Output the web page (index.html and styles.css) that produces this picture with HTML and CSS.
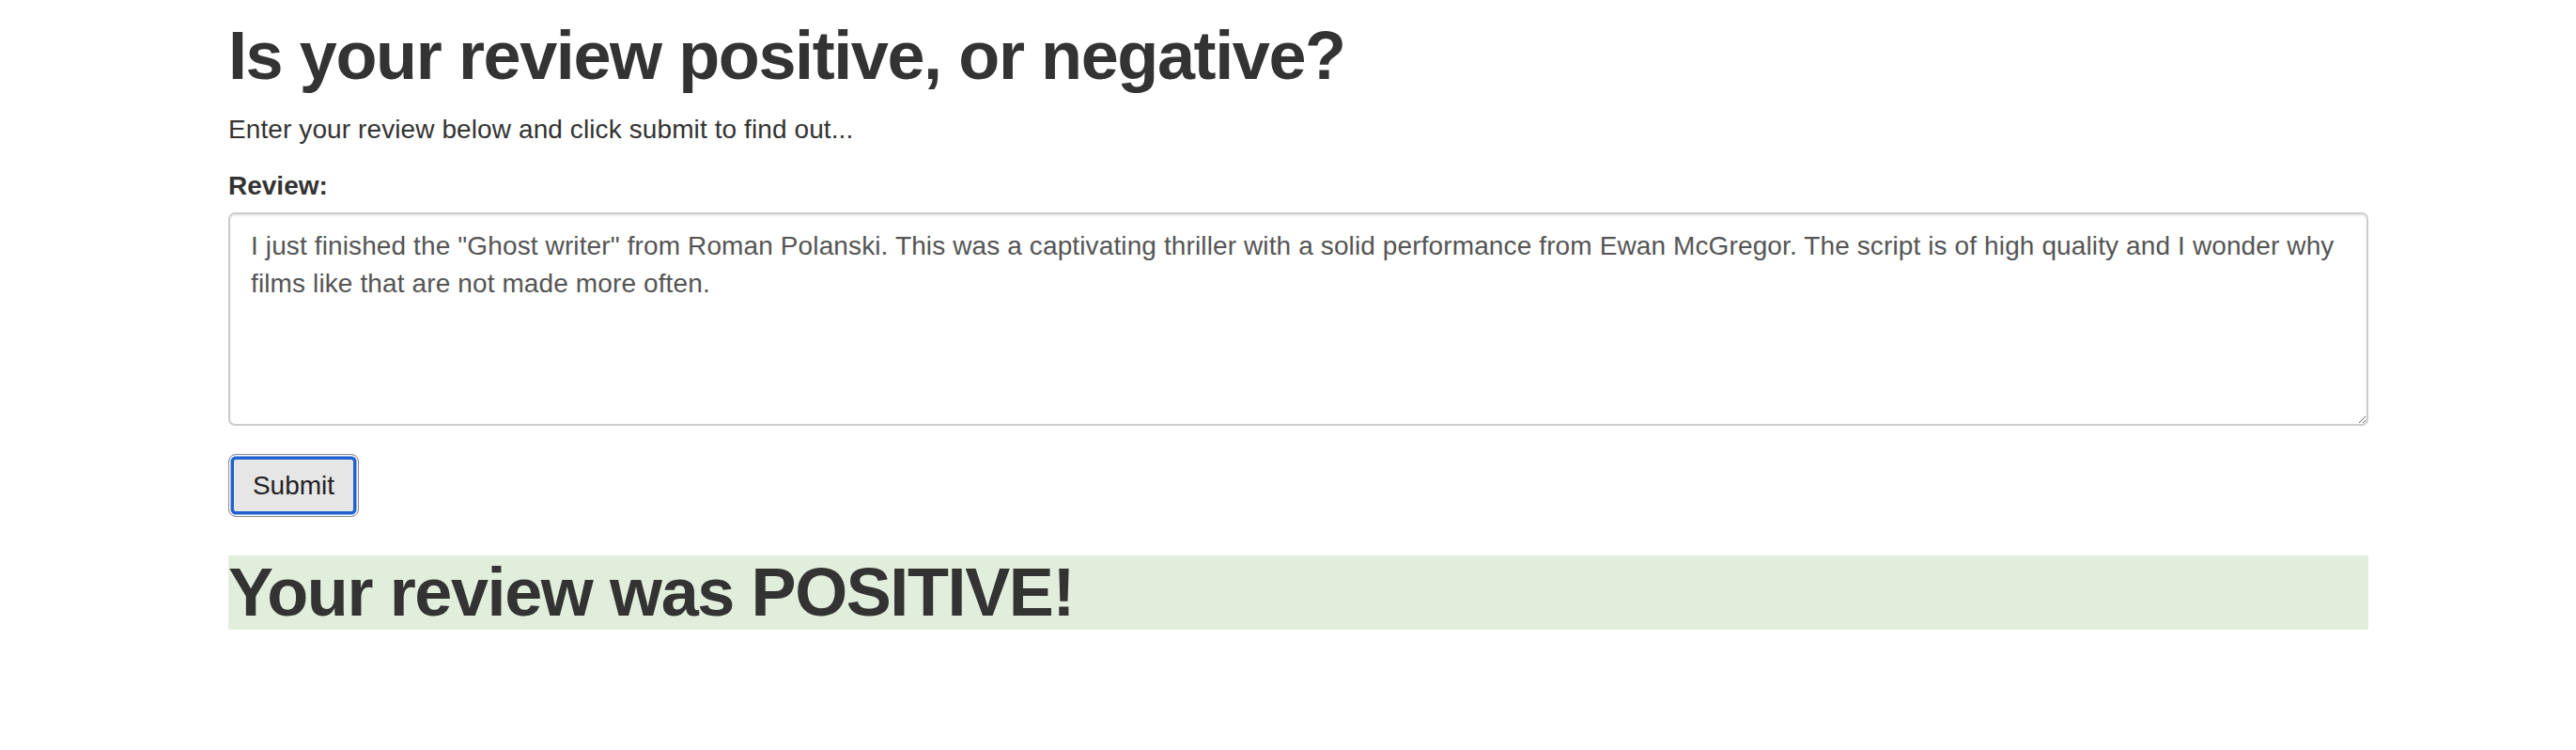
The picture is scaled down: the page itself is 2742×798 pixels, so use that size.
FILE: index.html
```html
<!DOCTYPE html>
<html lang="en">
<head>
<meta charset="utf-8">
<title>Review sentiment</title>
<link rel="stylesheet" href="styles.css">
</head>
<body>
<div class="page">
  <h1 class="title">Is your review positive, or negative?</h1>
  <p class="lead">Enter your review below and click submit to find out...</p>
  <form class="review-form">
    <label class="field-label" for="review">Review:</label>
    <textarea id="review" class="review-input">I just finished the "Ghost writer" from Roman Polanski. This was a captivating thriller with a solid performance from Ewan McGregor. The script is of high quality and I wonder why films like that are not made more often.</textarea>
    <button type="button" class="submit-btn">Submit</button>
  </form>
  <h1 class="result">Your review was POSITIVE!</h1>
</div>
</body>
</html>
```

FILE: styles.css
```css
html, body {
  margin: 0;
  padding: 0;
  background: #fff;
}

body {
  font-family: "Liberation Sans", Arial, Helvetica, sans-serif;
  font-size: 28px;
  line-height: 40px;
  color: #333;
}

.page {
  margin-left: 243px;
  width: 2278px;
  padding-top: 20px;
}

.title {
  margin: 0 0 19px 0;
  font-size: 72px;
  line-height: 79px;
  font-weight: bold;
  letter-spacing: -1.4px;
}

.lead {
  margin: 0 0 20px 0;
  letter-spacing: 0.1px;
}

.review-form {
  display: flex;
  flex-direction: column;
  align-items: flex-start;
}

.field-label {
  display: block;
  font-weight: bold;
  margin-bottom: 8px;
}

.review-input {
  display: block;
  box-sizing: border-box;
  width: 100%;
  height: 227px;
  margin: 0;
  padding: 14px 22px;
  border: 2px solid #ccc;
  border-radius: 7px;
  box-shadow: inset 0 2px 2px rgba(0, 0, 0, 0.075);
  font-family: "Liberation Sans", Arial, Helvetica, sans-serif;
  font-size: 28px;
  line-height: 40px;
  letter-spacing: 0.12px;
  color: #555;
  background: #fff;
  resize: vertical;
}

.submit-btn {
  box-sizing: border-box;
  width: 139px;
  height: 67px;
  margin-top: 30px;
  padding: 0;
  border: 1px solid #8c8c8c;
  border-radius: 8px;
  background: #e6e6e6;
  box-shadow: inset 0 0 0 1.5px #fff, inset 0 0 0 5px #2162cf;
  font-family: "Liberation Sans", Arial, Helvetica, sans-serif;
  font-size: 28px;
  color: #222;
}

.result {
  margin: 41px 0 0 0;
  background: #e1eedb;
  font-size: 72px;
  line-height: 79px;
  font-weight: bold;
  letter-spacing: -1.4px;
}
```
